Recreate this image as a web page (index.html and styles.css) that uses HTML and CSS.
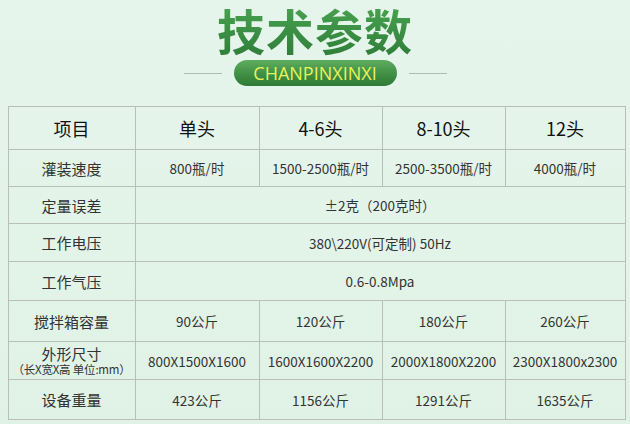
FILE: index.html
```html
<!DOCTYPE html>
<html lang="zh">
<head>
<meta charset="utf-8">
<link rel="stylesheet" href="styles.css">
</head>
<body>
<div class="page">
  <h1 class="title">技术参数</h1>
  <div class="sub">
    <span class="rule"></span>
    <span class="pill">CHANPINXINXI</span>
    <span class="rule"></span>
  </div>
  <table class="spec">
    <colgroup>
      <col class="c1"><col class="c2"><col class="c3"><col class="c4"><col class="c5">
    </colgroup>
    <tr class="head r1">
      <th>项目</th><th>单头</th><th>4-6头</th><th>8-10头</th><th>12头</th>
    </tr>
    <tr class="r2">
      <td class="name">灌装速度</td><td>800瓶/时</td><td>1500-2500瓶/时</td><td>2500-3500瓶/时</td><td>4000瓶/时</td>
    </tr>
    <tr class="r3">
      <td class="name">定量误差</td><td colspan="4">±2克（200克时）</td>
    </tr>
    <tr class="r4">
      <td class="name">工作电压</td><td colspan="4">380\220V(可定制) 50Hz</td>
    </tr>
    <tr class="r5">
      <td class="name">工作气压</td><td colspan="4">0.6-0.8Mpa</td>
    </tr>
    <tr class="r6">
      <td class="name">搅拌箱容量</td><td>90公斤</td><td>120公斤</td><td>180公斤</td><td>260公斤</td>
    </tr>
    <tr class="r7">
      <td class="name"><div class="nm">外形尺寸</div><div class="unit">（长X宽X高 单位:mm）</div></td><td>800X1500X1600</td><td>1600X1600X2200</td><td>2000X1800X2200</td><td>2300X1800x2300</td>
    </tr>
    <tr class="r8">
      <td class="name">设备重量</td><td>423公斤</td><td>1156公斤</td><td>1291公斤</td><td>1635公斤</td>
    </tr>
  </table>
</div>
</body>
</html>
```
FILE: styles.css
```css
html, body {
  margin: 0;
  padding: 0;
}
body {
  width: 630px;
  height: 424px;
  overflow: hidden;
  background: linear-gradient(180deg, #e6f5ec 0%, #e0f2e6 100%);
  font-family: "Noto Sans CJK SC", "Noto Sans", sans-serif;
  color: #333;
}
.page {
  display: flex;
  flex-direction: column;
  align-items: center;
}
.title {
  margin: 0;
  font-size: 48px;
  line-height: 58px;
  font-weight: 700;
  letter-spacing: 1px;
  color: #3d8f46;
  background: linear-gradient(180deg, #4aa552 0%, #2f7d39 100%);
  -webkit-background-clip: text;
  background-clip: text;
  -webkit-text-fill-color: transparent;
}
.sub {
  display: flex;
  align-items: center;
  gap: 12px;
  height: 30px;
}
.rule {
  width: 38px;
  height: 1px;
  background: #aeb9b0;
}
.pill {
  width: 163px;
  height: 26px;
  border-radius: 13px;
  background: linear-gradient(180deg, #5ead5e 0%, #3f8f45 55%, #2f7a36 100%);
  color: #e9f25c;
  font-family: "Open Sans", "Noto Sans", sans-serif;
  font-weight: 400;
  font-size: 18px;
  line-height: 26px;
  text-align: center;
  letter-spacing: 0;
}
.spec {
  margin-top: 18px;
  width: 617px;
  border-collapse: collapse;
  table-layout: fixed;
  margin-left: 3px;
}
.c1 { width: 127px; }
.c2 { width: 124px; }
.c3 { width: 123px; }
.c4 { width: 123px; }
.c5 { width: 120px; }
.spec th, .spec td {
  border: 1px solid #b8beb9;
  text-align: center;
  padding: 0;
  font-size: 13.5px;
  color: #333;
  white-space: nowrap;
}
.spec th {
  font-size: 18px;
  font-weight: 400;
  color: #111;
}
.spec td.name {
  font-size: 15px;
  color: #333;
}
.r1 { height: 43px; }
.r2 { height: 37px; }
.r3 { height: 37px; }
.r4 { height: 38px; }
.r5 { height: 39px; }
.r6 { height: 41px; }
.r7 { height: 38px; }
.r8 { height: 40px; }
.nm {
  line-height: 17px;
}
.unit {
  font-size: 11.5px;
  line-height: 14px;
  letter-spacing: -0.2px;
  margin: 0 -4px;
}
```
